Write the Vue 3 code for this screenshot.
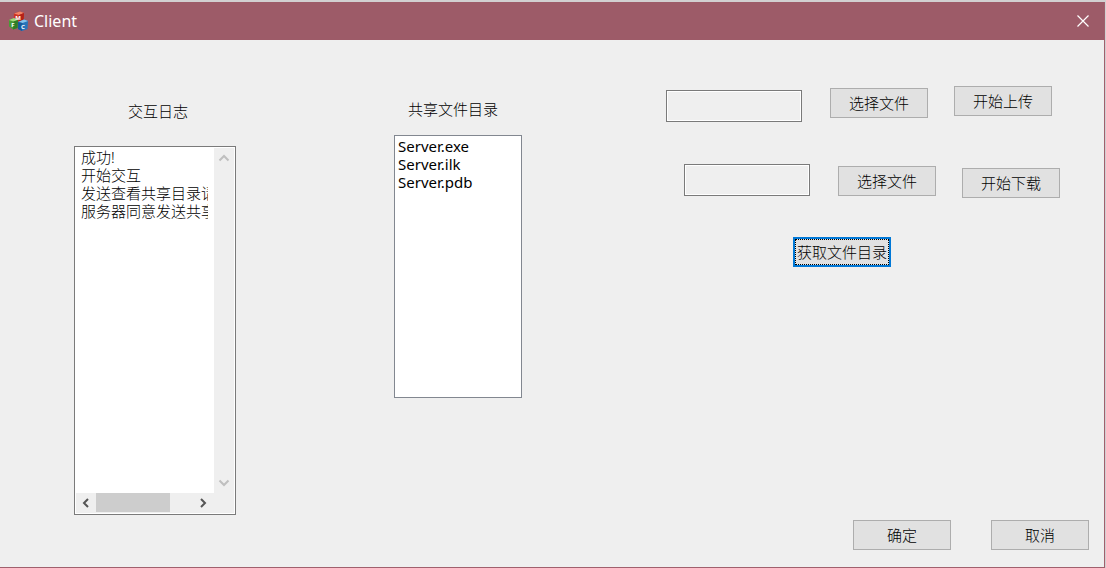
<script setup>
import { ref } from 'vue'

const log = ref('成功!\n开始交互\n发送查看共享目录请求\n服务器同意发送共享目录')
const files = ['Server.exe', 'Server.ilk', 'Server.pdb']
const selected = ref([])
const uploadPath = ref('')
const downloadPath = ref('')
</script>

<template>
  <div class="desktop">
    <div class="window">
      <header class="titlebar">
        <svg class="logo" viewBox="0 0 20 20" aria-hidden="true">
          <path d="M5 2.500 11 .5l4 1.500-.5 7.500-5 2-5-2z" fill="#cf3524" />
          <path d="M5 2.500 11 .5l4 1.500-5 2z" fill="#f18468" />
          <path d="M10 4l5-2-.5 7.500-5 2z" fill="#b52218" />
          <path d="M0 9l5-2 4 2-.5 8-4.500 1.500-4-3z" fill="#4b9a36" />
          <path d="M0 9l5-2 4 2-4.500 1.500z" fill="#a5d77c" />
          <path d="M4.500 10.500 9 9l-.5 8L4 18.500z" fill="#2f7d27" />
          <path d="M9 11l6-2.500 4 1.500-.5 8-5.500 2-4-2z" fill="#2875ba" />
          <path d="M9 11l6-2.500 4 1.500-5.500 2z" fill="#86c4ec" />
          <path d="M9 11l4.500 1-.5 8-4-2z" fill="#175a9d" />
          <g fill="#fff" font-size="6" font-weight="700" text-anchor="middle">
            <text x="9" y="9">M</text>
            <text x="4" y="16">F</text>
            <text x="14" y="18">C</text>
          </g>
        </svg>
        <h1>Client</h1>
        <button class="close" type="button" aria-label="Close">
          <svg viewBox="0 0 12 12" aria-hidden="true"><path d="M.5.5l11 11M11.500.5l-11 11" fill="none" stroke="#fff" stroke-width="1.200" /></svg>
        </button>
      </header>

      <main class="content">
        <section class="log-column">
          <label for="log">交互日志</label>
          <div class="log-box">
            <textarea id="log" v-model="log" wrap="off" readonly spellcheck="false"></textarea>
            <div class="vbar">
              <button type="button" aria-label="Scroll up" disabled>
                <svg viewBox="0 0 12 12"><path d="M1.500 8.500 6 4l4.500 4.500" /></svg>
              </button>
              <button type="button" aria-label="Scroll down" disabled>
                <svg viewBox="0 0 12 12"><path d="M1.500 3.500 6 8l4.500-4.500" /></svg>
              </button>
            </div>
            <div class="hbar">
              <button type="button" aria-label="Scroll left">
                <svg viewBox="0 0 12 12"><path d="M8 2 4 6l4 4" /></svg>
              </button>
              <div class="track"><div class="thumb"></div></div>
              <button type="button" aria-label="Scroll right">
                <svg viewBox="0 0 12 12"><path d="M3 2l4 4-4 4" /></svg>
              </button>
            </div>
          </div>
        </section>

        <section class="files-column">
          <label for="files">共享文件目录</label>
          <select id="files" v-model="selected" size="14" multiple>
            <option v-for="name in files" :key="name">{{ name }}</option>
          </select>
        </section>

        <section class="transfer">
          <div class="row upload">
            <input v-model="uploadPath" class="low" type="text" aria-label="上传文件" />
            <button class="btn mid" type="button">选择文件</button>
            <button class="btn" type="button">开始上传</button>
          </div>
          <div class="row download">
            <input v-model="downloadPath" type="text" aria-label="下载文件" />
            <button class="btn mid" type="button">选择文件</button>
            <button class="btn low" type="button">开始下载</button>
          </div>
          <button class="btn focused" type="button">获取文件目录</button>
        </section>
      </main>

      <footer class="actions">
        <button class="btn" type="button">确定</button>
        <button class="btn" type="button">取消</button>
      </footer>
    </div>
  </div>
</template>

<style>
body {
  background: #d2d0d1;
}
</style>

<style scoped>
* {
  box-sizing: border-box;
}

.desktop {
  display: flex;
  min-height: 100vh;
  padding: 2px 1px 0 0;
  font-family: "Noto Sans", "Noto Sans CJK SC", sans-serif;
  font-size: 15px;
  font-weight: 300;
  line-height: 18px;
  color: #000;
}

.window {
  display: flex;
  flex: 1;
  flex-direction: column;
  border: solid #a0606d;
  border-width: 0 1px 1px 0;
  background: #efefef;
}

.titlebar {
  display: flex;
  align-items: center;
  height: 38px;
  padding: 0 15px 0 9px;
  background: #9d5b68;
  color: #fff;
}

.logo {
  width: 20px;
  height: 20px;
}

h1 {
  flex: 1;
  margin: 0 0 0 5px;
  font-size: 16px;
  font-weight: 400;
}

.close {
  display: flex;
  padding: 0;
  border: 0;
  background: none;
}

.close svg {
  width: 12px;
  height: 12px;
}

.content {
  display: grid;
  flex: 1;
  grid-template-columns: minmax(162px, 320fr) minmax(128px, 272fr) minmax(394px, 438fr);
  align-items: start;
  padding-left: 74px;
}

.content label {
  display: block;
}

.log-column {
  padding-top: 62px;
}

.log-column label {
  padding-left: 54px;
}

.log-box {
  display: grid;
  grid-template-columns: 1fr 20px;
  grid-template-rows: 1fr 20px;
  width: 162px;
  height: 369px;
  margin-top: 26px;
  padding: 1px;
  border: 1px solid #7a7a7a;
  background: #fff;
}

textarea {
  width: auto;
  min-width: 0;
  margin: 0 6px 0 5px;
  padding: 0;
  overflow: hidden;
  border: 0;
  outline: 0;
  background: #fff;
  color: #000;
  font: inherit;
  resize: none;
}

.vbar {
  display: flex;
  flex-direction: column;
  justify-content: space-between;
  background: #efefef;
}

.hbar {
  display: flex;
  grid-column: 1 / -1;
  padding-right: 20px;
  background: #efefef;
}

.log-box button {
  display: flex;
  align-items: center;
  justify-content: center;
  width: 20px;
  height: 20px;
  padding: 0;
  border: 0;
  background: none;
}

.log-box svg {
  width: 12px;
  height: 12px;
  fill: none;
  stroke: #555;
  stroke-width: 2;
}

.vbar svg {
  stroke: #bfbfbf;
}

.track {
  flex: 1;
}

.thumb {
  width: 75%;
  height: 19px;
  background: #cdcdcd;
}

.files-column {
  padding-top: 60px;
}

.files-column label {
  padding-left: 14px;
}

select {
  display: block;
  width: 128px;
  height: 263px;
  margin-top: 17px;
  padding: 0 3px;
  overflow: hidden;
  border: 1px solid #828790;
  border-radius: 0;
  outline: 0;
  background: #fff;
  color: #000;
  font: inherit;
  font-weight: 400;
  appearance: none;
}

option {
  height: 18px;
  min-height: 18px;
  padding: 0;
  line-height: 18px;
}

.transfer {
  padding-top: 46px;
}

.row {
  display: flex;
  align-items: flex-start;
}

.row .btn + .btn {
  margin-left: 26px;
}

.row input + .btn {
  margin-left: 28px;
}

.row .mid {
  margin-top: 2px;
}

.row .low {
  margin-top: 4px;
}

input {
  width: 136px;
  height: 32px;
  padding: 0 6px;
  border: 1px solid #7a7a7a;
  border-radius: 0;
  background: #efefef;
  box-shadow: inset 0 0 0 1px #fff;
  font: inherit;
}

.download {
  margin-top: 42px;
  padding-left: 18px;
}

.download input {
  width: 126px;
}

.btn {
  width: 98px;
  height: 30px;
  padding: 0;
  border: 1px solid #adadad;
  border-radius: 0;
  background: #e1e1e1;
  color: #000;
  font: inherit;
  white-space: nowrap;
}

.focused {
  display: block;
  margin: 39px 0 0 127px;
  border: 2px solid #0078d7;
  outline: 1px dotted #000;
  outline-offset: -3px;
}

.actions {
  display: flex;
  justify-content: flex-end;
  gap: 40px;
  padding: 5px 15px 17px;
}
</style>
